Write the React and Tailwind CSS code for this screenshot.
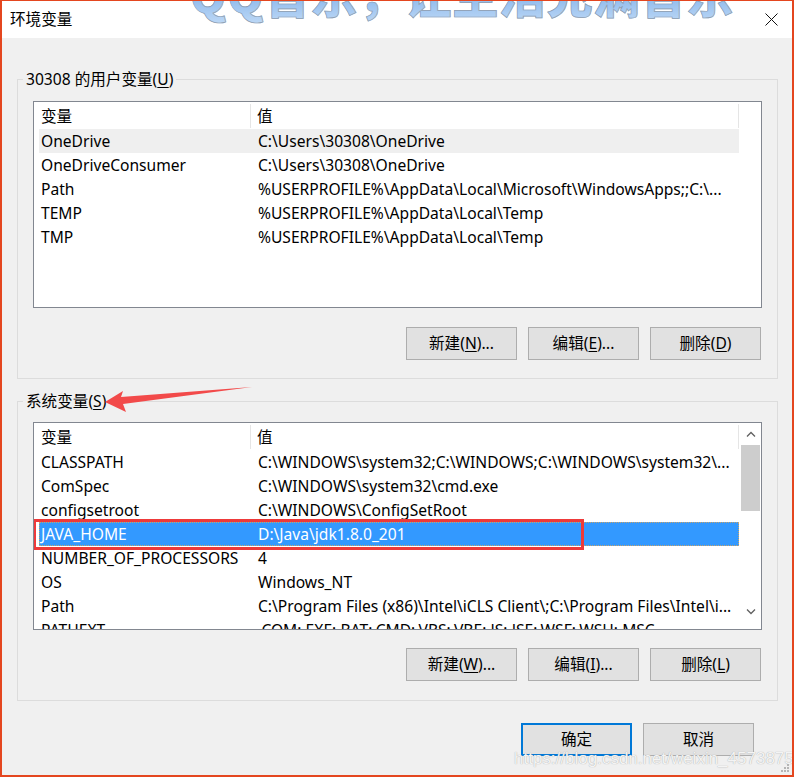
import React from "react";

const FONT = "font-['Noto_Sans','Noto_Sans_CJK_SC',sans-serif]";

const userRows = [
  ["OneDrive", "C:\\Users\\30308\\OneDrive", "hover"],
  ["OneDriveConsumer", "C:\\Users\\30308\\OneDrive"],
  ["Path", "%USERPROFILE%\\AppData\\Local\\Microsoft\\WindowsApps;;C:\\..."],
  ["TEMP", "%USERPROFILE%\\AppData\\Local\\Temp"],
  ["TMP", "%USERPROFILE%\\AppData\\Local\\Temp"],
];

const sysRows = [
  ["CLASSPATH", "C:\\WINDOWS\\system32;C:\\WINDOWS;C:\\WINDOWS\\system32\\..."],
  ["ComSpec", "C:\\WINDOWS\\system32\\cmd.exe"],
  ["configsetroot", "C:\\WINDOWS\\ConfigSetRoot"],
  ["JAVA_HOME", "D:\\Java\\jdk1.8.0_201", "selected"],
  ["NUMBER_OF_PROCESSORS", "4"],
  ["OS", "Windows_NT"],
  ["Path", "C:\\Program Files (x86)\\Intel\\iCLS Client\\;C:\\Program Files\\Intel\\i..."],
  ["PATHEXT", ".COM;.EXE;.BAT;.CMD;.VBS;.VBE;.JS;.JSE;.WSF;.WSH;.MSC"],
];

function Row({ name, value, state }) {
  const bg = state === "selected" ? "bg-[#3399ff] text-white" : state === "hover" ? "bg-[#efefef]" : "";
  return (
    <div className={`relative flex h-[24px] w-[700px] shrink-0 items-center whitespace-nowrap ${bg}`}>
      <div className="w-[212px] shrink-0 pl-[2px] pt-[2px]">{name}</div>
      <div className="flex-1 pl-[7px] pt-[2px]">{value}</div>
      {state === "selected" && (
        <>
          <div className="absolute inset-0 border border-dotted border-[#c9a36a]" />
          <div className="absolute left-[-6px] top-[-3px] h-[31px] w-[551px] border-[3px] border-[#ee3a3a]" />
        </>
      )}
    </div>
  );
}

function VarList({ rows, h, scroll }) {
  return (
    <div className={`flex overflow-hidden border border-[#828790] bg-white ${h}`}>
      <div className="flex flex-col pl-[5px]">
        <div className="flex h-[27px] w-[700px] shrink-0 items-center pt-[1px]">
          <div className="flex h-[24px] w-[212px] items-center border-r border-[#e5e5e5] pl-[2px] pt-[2px]">变量</div>
          <div className="flex h-[24px] flex-1 items-center border-r border-[#e5e5e5] pl-[6px] pt-[2px]">值</div>
        </div>
        {rows.map((r) => (
          <Row key={r[0]} name={r[0]} value={r[1]} state={r[2]} />
        ))}
      </div>
      {scroll && (
        <div className="ml-[1px] flex w-[21px] flex-col items-center">
          <div className="flex h-[22px] items-center justify-center">
            <svg width="10" height="6" viewBox="0 0 10 6"><path d="M1 5.5 L5 1.5 L9 5.5" fill="none" stroke="#606060" strokeWidth="1.3" /></svg>
          </div>
          <div className="h-[66px] w-[19px] bg-[#cdcdcd]" />
          <div className="flex-1" />
          <div className="mb-[6px] flex h-[22px] items-center justify-center">
            <svg width="10" height="6" viewBox="0 0 10 6"><path d="M1 0.5 L5 4.5 L9 0.5" fill="none" stroke="#606060" strokeWidth="1.3" /></svg>
          </div>
        </div>
      )}
    </div>
  );
}

function Btn({ label, k, tail = "", primary }) {
  return (
    <button
      className={`flex h-[33px] w-[111px] items-center justify-center bg-[#e1e1e1] ${
        primary ? "border-2 border-[#0078d7]" : "border border-[#adadad]"
      }`}
    >
      {label}
      {k && (
        <>
          (<span className="underline underline-offset-2">{k}</span>){tail}
        </>
      )}
    </button>
  );
}

function Group({ title, children, className = "" }) {
  return (
    <fieldset className={`border border-[#dcdcdc] px-[15px] ${className}`}>
      <legend className="ml-[-10px] h-[20px] px-[3px] leading-[20px]">{title}</legend>
      {children}
    </fieldset>
  );
}

export default function App() {
  return (
    <div
      className={`relative h-[777px] w-[794px] overflow-hidden border-x-2 border-b-2 border-t border-[#e4461f] bg-[#f0f0f0] text-[15.6px] text-black ${FONT}`}
    >
      {/* title bar */}
      <div className="flex h-[37px] items-center justify-between bg-white pl-[8px] pr-[14px]">
        <span>环境变量</span>
        <svg width="13" height="13" viewBox="0 0 13 13">
          <path d="M0.5 0.5 L12.5 12.5 M12.5 0.5 L0.5 12.5" stroke="#111" strokeWidth="1" />
        </svg>
      </div>

      <div className="pl-[15px] pr-[14px] pt-[31px]">
        <Group title={<>30308 的用户变量(<span className="underline underline-offset-2">U</span>)</>} className="pt-[12px] pb-[18px]">
          <VarList rows={userRows} h="h-[207px]" />
          <div className="mt-[19px] flex justify-end gap-[11px] pr-[1px]">
            <Btn label="新建" k="N" tail="..." />
            <Btn label="编辑" k="E" tail="..." />
            <Btn label="删除" k="D" />
          </div>
        </Group>

        <Group title={<>系统变量(<span className="underline underline-offset-2">S</span>)</>} className="mt-[12px] pt-[11px] pb-[19px]">
          <VarList rows={sysRows} h="h-[208px]" scroll />
          <div className="mt-[18px] flex justify-end gap-[11px] pr-[1px]">
            <Btn label="新建" k="W" tail="..." />
            <Btn label="编辑" k="I" tail="..." />
            <Btn label="删除" k="L" />
          </div>
        </Group>

        <div className="mt-[22px] flex justify-end gap-[11px] pr-[24px]">
          <Btn label="确定" primary />
          <Btn label="取消" />
        </div>
      </div>

      {/* annotation arrow */}
      <svg className="absolute left-0 top-0" width="794" height="777" viewBox="0 0 794 777" style={{ pointerEvents: "none" }}>
        <polygon points="103,401 121,390 119,396 250,386 121,403 124,411" fill="#f24a4a" />
      </svg>

      {/* QQ music watermark over the title bar */}
      <div className="absolute left-[188px] top-[-42px] whitespace-nowrap bg-gradient-to-b from-[#4f8fdd] to-[#c4ddf7] bg-clip-text text-[46px] font-black tracking-[1px] text-transparent [-webkit-text-stroke:0.7px_#8e9db0] font-['Noto_Sans_CJK_SC',sans-serif]">
        QQ音乐，让生活充满音乐
      </div>

      {/* blog watermark */}
      <div className="absolute left-[512px] top-[745px] whitespace-nowrap text-[17px] text-[#f4f4f4] [text-shadow:0_0_1px_#9a9a9a] font-['Liberation_Sans',sans-serif]">
        https://blog.csdn.net/weixin_45738756
      </div>

      {/* size grip */}
      <svg className="absolute bottom-[2px] right-[2px]" width="10" height="10" viewBox="0 0 10 10">
        <rect x="7" y="1" width="2" height="2" fill="#b5b5b5" />
        <rect x="4" y="4" width="2" height="2" fill="#b5b5b5" />
        <rect x="7" y="4" width="2" height="2" fill="#b5b5b5" />
        <rect x="1" y="7" width="2" height="2" fill="#b5b5b5" />
        <rect x="4" y="7" width="2" height="2" fill="#b5b5b5" />
        <rect x="7" y="7" width="2" height="2" fill="#b5b5b5" />
      </svg>
    </div>
  );
}
